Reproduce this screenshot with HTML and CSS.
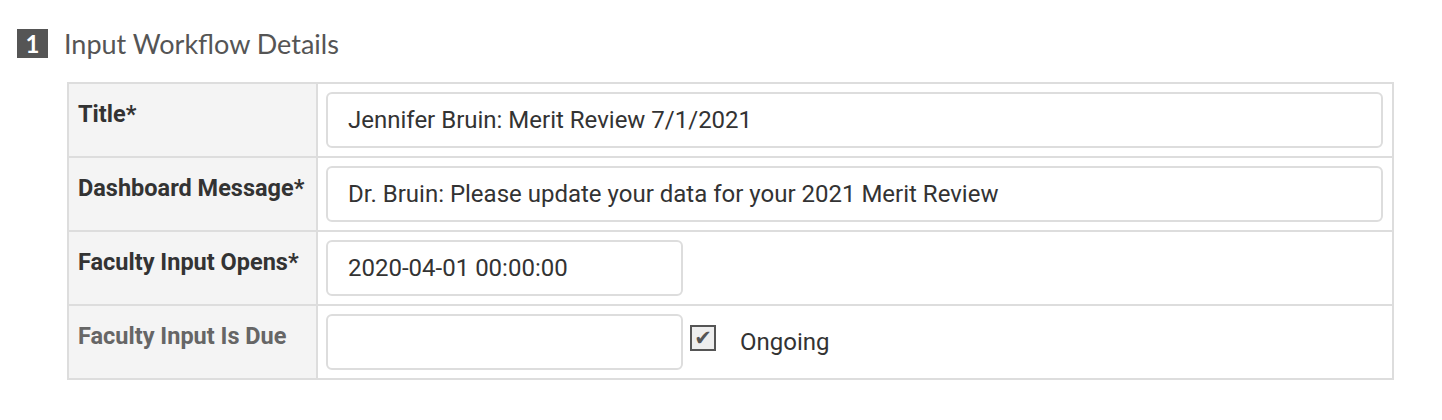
FILE: index.html
```html
<!DOCTYPE html>
<html>
<head>
<meta charset="utf-8">
<link rel="stylesheet" href="styles.css">
</head>
<body>
<div class="section">
  <div class="heading">
    <span class="badge">1</span>
    <span class="heading-text">Input Workflow Details</span>
  </div>
  <table class="form-table">
    <tr>
      <th class="label">Title*</th>
      <td class="field"><div class="input wide">Jennifer Bruin: Merit Review 7/1/2021</div></td>
    </tr>
    <tr>
      <th class="label">Dashboard Message*</th>
      <td class="field"><div class="input wide">Dr. Bruin: Please update your data for your 2021 Merit Review</div></td>
    </tr>
    <tr>
      <th class="label">Faculty Input Opens*</th>
      <td class="field"><div class="input short">2020-04-01 00:00:00</div></td>
    </tr>
    <tr>
      <th class="label muted">Faculty Input Is Due</th>
      <td class="field">
        <div class="field-row">
          <div class="input short"></div>
          <span class="checkbox">✔</span>
          <span class="check-label">Ongoing</span>
        </div>
      </td>
    </tr>
  </table>
</div>
</body>
</html>
```

FILE: styles.css
```css
html, body {
  margin: 0;
  padding: 0;
  background: #fff;
}
body {
  font-family: Roboto, "Liberation Sans", sans-serif;
  color: #333;
}
.section {
  padding: 29px 0 0 17px;
}
.heading {
  display: flex;
  align-items: center;
  height: 29px;
}
.badge {
  display: inline-flex;
  align-items: center;
  justify-content: center;
  width: 31px;
  height: 29px;
  background: #555;
  color: #fff;
  font-family: Lato, "Open Sans", sans-serif;
  font-weight: 700;
  font-size: 24px;
}
.heading-text {
  margin-left: 16px;
  font-family: Lato, "Open Sans", sans-serif;
  font-size: 27px;
  color: #555;
}
.form-table {
  margin: 24px 0 0 50px;
  border-collapse: collapse;
  border: 2px solid #ddd;
  width: 1327px;
}
.form-table tr {
  border-bottom: 2px solid #ddd;
}
.label {
  width: 231px;
  background: #f4f4f4;
  border-right: 2px solid #ddd;
  text-align: left;
  vertical-align: top;
  padding: 16px 8px 0 9px;
  font-size: 23.5px;
  font-weight: 700;
  color: #333;
  height: 56px;
  white-space: nowrap;
}
.label.muted {
  color: #666;
}
.field {
  padding: 8px 9px 8px 8px;
  vertical-align: top;
}
.input {
  box-sizing: border-box;
  height: 56px;
  border: 2px solid #ddd;
  border-radius: 6px;
  padding: 0 0 0 20px;
  display: flex;
  align-items: center;
  font-size: 24px;
  color: #333;
  background: #fff;
}
.input.wide {
  width: 1057px;
}
.input.short {
  width: 357px;
}
.field-row {
  display: flex;
  align-items: center;
}
.checkbox {
  box-sizing: border-box;
  width: 26px;
  height: 26px;
  margin-left: 7px;
  margin-top: -9px;
  border: 2px solid #555;
  background: #eee;
  color: #555;
  font-size: 21px;
  line-height: 22px;
  text-align: center;
  font-family: "DejaVu Sans", sans-serif;
}
.check-label {
  margin-left: 24px;
  font-size: 24px;
  color: #333;
}
```
